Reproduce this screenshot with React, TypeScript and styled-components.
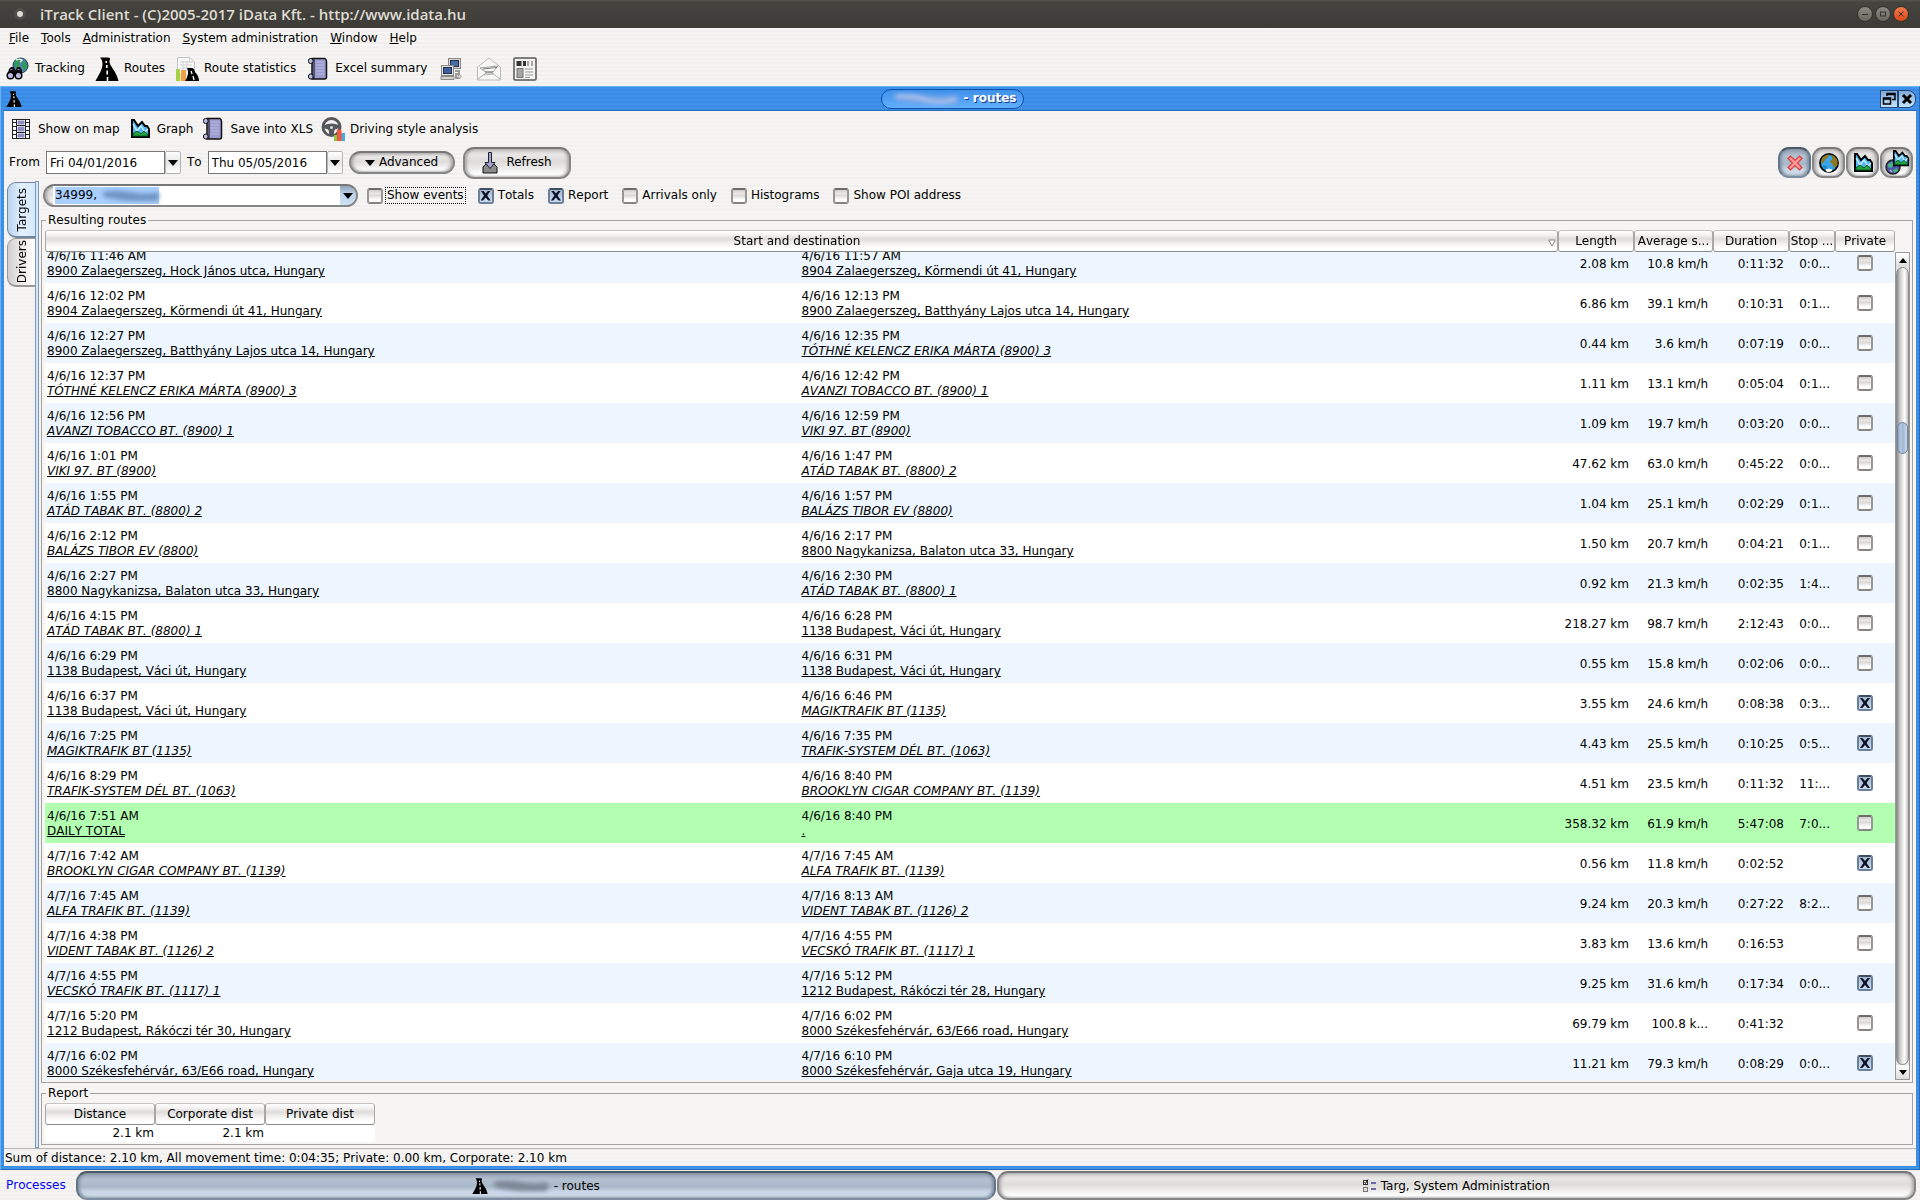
import React, { useLayoutEffect, useRef } from "react";
import styled, { createGlobalStyle, css } from "styled-components";

const stripes = css`
  background: repeating-linear-gradient(#f6f5f3 0 2px, #f1f0ee 2px 4px);
`;
const blueStripes = css`
  background: repeating-linear-gradient(#3f92ec 0 2px, #3a8ae3 2px 4px);
`;
const silver = css`
  border: 2px solid #868686;
  border-top-color: #777;
  background: linear-gradient(#c9c8c6, #e8e7e5 20%, #dddcda 45%, #eeedec 70%, #fff 90%);
  box-shadow: inset 2px 0 3px #aaa, inset -2px 0 3px #aaa;
`;
const steel = css`
  border: 2px solid #66788c;
  border-color: #4b5867 #62758a #7d8ea2;
  background: linear-gradient(#8f9dad, #b3c1d1 25%, #a9b8c9 55%, #c9d6e6 75%, #cfdcec);
  box-shadow: inset 2px 0 3px #8492a2, inset -2px 0 3px #8492a2;
`;

const Global = createGlobalStyle`
  * { box-sizing: border-box; }
  body { margin: 0; font-kerning: none; }
  body, button, input {
    font-family: "DejaVu Sans", "Liberation Sans", sans-serif;
    font-size: 12px;
    line-height: 15px;
    color: #000;
  }
  button { margin: 0; padding: 0; border: 0; background: none; }
  svg { display: block; flex: none; }
`;

const Desktop = styled.div`
  ${stripes}
  height: 100vh;
  display: flex;
  flex-direction: column;
  overflow: hidden;
`;

const TitleBar = styled.header`
  height: 28px;
  flex: none;
  display: flex;
  align-items: center;
  padding: 0 11px 0 14px;
  background: linear-gradient(#55534d, #45443f 8%, #3c3b37);
`;
const AppDot = styled.span`
  width: 12px;
  height: 12px;
  border-radius: 50%;
  border: 3px solid #4e4d49;
  background: #dfdbd2;
`;
const AppTitle = styled.h1`
  flex: 1;
  margin: 0 0 0 14px;
  font: 600 15px/20px "Open Sans", "Noto Sans", sans-serif;
  color: #dfdbd2;
`;
const WindowControls = styled.div`
  display: flex;
  gap: 2px;
`;
const RoundButton = styled.button<{ $close?: boolean }>`
  width: 16px;
  height: 16px;
  border-radius: 50%;
  border: 1px solid #33322e;
  background: ${(p) => (p.$close ? "linear-gradient(#f57b50, #dd4814)" : "linear-gradient(#8a8880, #6a6861)")};
`;

const MenuBar = styled.nav`
  height: 21px;
  flex: none;
  display: flex;
  align-items: center;
  gap: 12px;
  padding-left: 9px;
`;
const MenuItem = styled.button`
  &::first-letter { text-decoration: underline; }
`;
const Toolbar = styled.div<{ $inner?: boolean }>`
  height: ${(p) => (p.$inner ? 35 : 37)}px;
  flex: none;
  display: flex;
  align-items: center;
  gap: ${(p) => (p.$inner ? 8 : 10)}px;
  padding-top: ${(p) => (p.$inner ? 1 : 2)}px;
  padding-left: ${(p) => (p.$inner ? 5 : 6)}px;
`;
const ToolButton = styled.button`
  display: flex;
  align-items: center;
  gap: 5px;
`;
const IconButton = styled.button<{ $wide?: boolean }>`
  width: ${(p) => (p.$wide ? 28 : 24)}px;
  display: flex;
  justify-content: center;
`;

const Frame = styled.main`
  flex: 1;
  min-height: 0;
  display: flex;
  flex-direction: column;
  ${blueStripes}
  border-top: 1px solid #6db2fb;
  border-left: 1px solid #6db2fb;
  border-right: 1px solid #2a6bb5;
  border-bottom: 1px solid #2a6bb5;
  padding: 0 3px 3px;
`;
const FrameTitle = styled.div`
  height: 23px;
  flex: none;
  display: grid;
  grid-template-columns: 18px 1fr auto;
  align-items: center;
  padding-left: 2px;
`;
const TitlePill = styled.h2`
  margin: 0;
  height: 20px;
  width: 143px;
  justify-self: center;
  display: flex;
  align-items: center;
  justify-content: flex-end;
  gap: 4px;
  padding-right: 6px;
  border: 1px solid #0a50a8;
  border-radius: 10px;
  background: linear-gradient(#3f90ea, #62b0ff);
  color: #fff;
  font-size: 12px;
  text-shadow: 1px 1px 0 #123a8c;
`;
const FrameControls = styled.div`
  display: flex;
`;
const FrameButton = styled.button<{ $round?: boolean }>`
  width: 18px;
  height: 18px;
  display: grid;
  place-items: center;
  border: 1px solid #23497a;
  border-radius: ${(p) => (p.$round ? "0 8px 8px 0" : "0")};
  background: linear-gradient(#7fa9d8, #c6e3ff);
`;
const FrameBody = styled.div`
  flex: 1;
  min-height: 0;
  display: flex;
  flex-direction: column;
  ${stripes}
  border-top: 1px solid #2a6bb5;
`;

const RangeRow = styled.div`
  height: 33px;
  flex: none;
  display: flex;
  align-items: center;
  padding: 0 3px 0 5px;
  margin-bottom: 2px;
`;
const RangeLabel = styled.label`
  display: flex;
  align-items: center;
  gap: 6px;
`;
const DateInput = styled.input`
  width: 119px;
  height: 23px;
  margin: 0;
  padding: 0 3px;
  border: 1px solid #777;
  background: #fff;
`;
const DropButton = styled.button`
  width: 16px;
  height: 23px;
  margin-right: 6px;
  display: grid;
  place-items: center;
  border: 1px solid #b4b4b4;
  border-radius: 2px;
  background: linear-gradient(#fff, #e6e5e3 50%, #fff);
`;
const AdvancedButton = styled.button`
  ${silver}
  width: 106px;
  height: 23px;
  margin-right: 8px;
  display: flex;
  align-items: center;
  justify-content: center;
  gap: 4px;
  border-radius: 12px;
`;
const RefreshButton = styled.button`
  ${silver}
  width: 108px;
  height: 32px;
  display: flex;
  align-items: center;
  justify-content: center;
  gap: 7px;
  border-radius: 11px;
`;
const ViewButtons = styled.div`
  margin-left: auto;
  display: flex;
  gap: 1px;
`;
const ViewButton = styled.button<{ $on?: boolean }>`
  ${(p) => (p.$on ? steel : silver)}
  width: 33px;
  height: 31px;
  display: grid;
  place-items: center;
  border-radius: 11px;
`;

const Workspace = styled.div`
  flex: 1;
  min-height: 0;
  display: flex;
`;
const TabColumn = styled.div`
  width: 31px;
  flex: none;
  display: flex;
  flex-direction: column;
  padding: 1px 0 0 3px;
`;
const Tab = styled.button<{ $on?: boolean }>`
  height: ${(p) => (p.$on ? 56 : 49)}px;
  display: grid;
  place-items: center;
  padding-left: 2px;
  border: 1px solid ${(p) => (p.$on ? "#7288a2" : "#999")};
  border-bottom-width: 2px;
  border-right-width: 0;
  border-radius: 9px 0 0 9px;
  background: ${(p) =>
    p.$on ? "linear-gradient(90deg, #b9d2ee, #e4f1ff 50%, #d3e8ff)" : "linear-gradient(90deg, #cfcecc, #e9e8e6 40%, #fff)"};
`;
const TabText = styled.span`
  writing-mode: vertical-rl;
  transform: rotate(180deg);
`;
const TabEdge = styled.div`
  width: 4px;
  flex: none;
  border: 1px solid #8296ad;
  background: #d3e8ff;
`;
const Content = styled.div`
  flex: 1;
  min-width: 0;
  display: flex;
  flex-direction: column;
  gap: 3px;
  padding: 2px 3px 3px 2px;
  background: #f6f5f3;
`;
const FilterRow = styled.div`
  ${stripes}
  height: 27px;
  flex: none;
  display: flex;
  align-items: center;
  gap: 9px;
  padding: 0 0 2px 2px;
`;
const Filters = styled.div`
  display: flex;
  gap: 13px;
`;
const Combo = styled.div`
  ${silver}
  width: 315px;
  height: 23px;
  display: flex;
  align-items: stretch;
  padding-left: 8px;
  border-radius: 12px;
  overflow: hidden;
`;
const ComboField = styled.div`
  flex: 1;
  display: flex;
  align-items: center;
  padding-left: 2px;
  background: #fff;
`;
const Selection = styled.div`
  width: 104px;
  height: 17px;
  display: flex;
  align-items: center;
  background: #a9cfff;
`;
const ComboInput = styled.input`
  width: 46px;
  padding: 0;
  border: 0;
  background: transparent;
`;
const ComboArrow = styled.button`
  width: 16px;
  display: grid;
  place-items: center;
  background: linear-gradient(#8fa4bc, #bdd0e6 40%, #cfe3f8);
`;
const CheckLabel = styled.label<{ $focus?: boolean }>`
  display: flex;
  align-items: center;
  gap: 3px;
  & > span {
    padding: 0 1px;
    outline: ${(p) => (p.$focus ? "1px dotted #000" : "none")};
  }
`;
const CheckBox = styled.input.attrs({ type: "checkbox" })`
  appearance: none;
  width: 16px;
  height: 16px;
  margin: 0 auto;
  display: grid;
  place-items: center;
  border: 2px solid #8b8a89;
  border-color: #6d6c6b #989796 #858483;
  border-radius: 3px;
  background: linear-gradient(#d0cfce, #e9e8e7 30%, #dad9d8 45%, #fff 80%);
  &:checked {
    border-color: #3f4d63 #6c7f99 #6c7f99;
    background: linear-gradient(#a9bad1, #c9d9ee);
  }
  &:checked::before {
    content: "";
    width: 10px;
    height: 10px;
    background: #0b1226;
    clip-path: polygon(0 0, 24% 0, 50% 30%, 76% 0, 100% 0, 66% 50%, 100% 100%, 76% 100%, 50% 70%, 24% 100%, 0 100%, 34% 50%);
  }
`;

const Group = styled.fieldset<{ $grow?: boolean }>`
  ${(p) => p.$grow && "flex: 1;"}
  min-height: 0;
  min-width: 0;
  margin: 0;
  padding: 3px 2px 2px 3px;
  display: flex;
  border: 1px solid #a3a2a1;
`;
const Legend = styled.legend`
  height: 14px;
  margin-left: 1px;
  padding: 0 2px;
  line-height: 14px;
`;
const Scroller = styled.div`
  flex: 1;
  min-width: 0;
  overflow: hidden;
`;
const Table = styled.table<{ $fill?: boolean }>`
  width: ${(p) => (p.$fill ? "100%" : "330px")};
  table-layout: fixed;
  border-collapse: separate;
  border-spacing: 0;
  background: #fff;
`;
const HeadCell = styled.th`
  position: sticky;
  top: 0;
  z-index: 1;
  height: 22px;
  padding: 0;
  font-weight: normal;
  white-space: nowrap;
  border: 1px solid #a8a7a6;
  border-top-color: #c4c3c2;
  border-bottom-color: #8c8b8a;
  border-radius: 3px;
  background: linear-gradient(#fff, #f3f2f1 20%, #dedddb 40%, #efeeed 60%, #fff 85%);
`;
const HeadInner = styled.div`
  display: flex;
  align-items: center;
  justify-content: center;
  & > svg { margin: 3px 1px 0 0; }
  & > span { flex: 1; }
`;
const Row = styled.tr<{ $total?: boolean }>`
  height: 40px;
  background: ${(p) => (p.$total ? "#b2ffb2" : "#fff")};
  ${(p) => !p.$total && "&:nth-child(odd) { background: #edf6ff; }"}
`;
const RouteCell = styled.td`
  padding: 2px 2px 0;
`;
const Legs = styled.div`
  display: grid;
  grid-template-columns: 1fr 1fr;
`;
const Leg = styled.div`
  display: flex;
  flex-direction: column;
  align-items: flex-start;
  white-space: nowrap;
`;
const Place = styled.a<{ $poi?: boolean }>`
  color: #000;
  text-decoration: underline;
  font-style: ${(p) => (p.$poi ? "italic" : "normal")};
`;
const NumCell = styled.td<{ $tight?: boolean }>`
  padding: ${(p) => (p.$tight ? "1px 1px 1px 0" : "2px 5px 0 0")};
  text-align: right;
  white-space: nowrap;
`;
const TickCell = styled.td`
  padding: 0;
`;

const ScrollBar = styled.div`
  width: 15px;
  flex: none;
  margin-top: 22px;
  display: flex;
  flex-direction: column;
  border: 1px solid #9b9a99;
  background: #e4e3e2;
`;
const ScrollArrow = styled.button`
  height: 14px;
  display: grid;
  place-items: center;
  background: linear-gradient(#fff, #dedddc);
`;
const ScrollTrack = styled.div`
  flex: 1;
  display: flex;
  flex-direction: column;
  border: 1px solid #8a8a8a;
  border-radius: 7px;
  background: linear-gradient(90deg, #8e8e8e, #cfcecd 30%, #fff 70%, #c2c1c0);
`;
const ScrollSpace = styled.div<{ $share: number }>`
  flex: ${(p) => p.$share};
`;
const ScrollThumb = styled.div`
  height: 32px;
  flex: none;
  border: 1px solid #6f86a3;
  border-radius: 7px;
  background: linear-gradient(90deg, #8da5c4, #b9cbe2 35%, #9fb4cf 50%, #c8d8ec);
`;

const StatusBar = styled.footer`
  height: 18px;
  flex: none;
  padding: 2px 1px 0;
  border-top: 1px solid #b5b4b3;
`;
const TaskBar = styled.nav`
  height: 30px;
  flex: none;
  display: grid;
  grid-template-columns: 75px 1fr 1fr;
  align-items: center;
  padding-right: 4px;
  column-gap: 1px;
`;
const Processes = styled.a`
  padding-left: 6px;
  color: #0000ff;
  text-decoration: none;
`;
const TaskButton = styled.button<{ $on?: boolean }>`
  ${(p) => (p.$on ? steel : silver)}
  height: 29px;
  display: flex;
  align-items: center;
  justify-content: center;
  gap: 4px;
  padding-top: 2px;
  border-radius: 11px;
`;

/* ---------- drawings ---------- */

const Down = () => (
  <svg width="10" height="6" viewBox="0 0 10 6"><path d="M0 0h10L5 6z" /></svg>
);
const Up = () => (
  <svg width="8" height="5" viewBox="0 0 8 5"><path d="M0 5h8L4 0z" /></svg>
);
const DownSmall = () => (
  <svg width="8" height="5" viewBox="0 0 8 5"><path d="M0 0h8L4 5z" /></svg>
);

const Road = ({ size = 24 }: { size?: number }) => (
  <svg width={size} height={size} viewBox="0 0 24 24">
    <path d="M5 .5h8q2.500 0 2 1.500c-1 2-.5 4 .5 6 3 5 6.500 9 8 16H.5c3-6 7-11 7-17C7.500 4 6.500 2 5 .5z" fill="#000" />
    <path d="M11.300 4v2M11.800 8v3M12.200 13.500v4M12.500 20v4" stroke="#fff" strokeWidth="1.600" />
  </svg>
);

const Tracking = () => (
  <svg width="24" height="24" viewBox="0 0 24 24">
    <circle cx="14.500" cy="8.500" r="7.500" fill="#4f83b5" stroke="#1b3350" />
    <path d="M9 4c3-3 6-2 6 0l-2 3 1 3-4 1-2-3zM17 3l4 4v4l-3 3-2-5z" fill="#2f9a55" />
    <path d="M10 3c2-1 5-1 6 0l-2 2" stroke="#e8f4ea" strokeWidth="1.500" fill="none" />
    <path d="M3 12l2-2h3l1 3h1l1-3h3l2 3v6H1z" fill="#111" />
    <path d="M4.500 12.500h2M11.500 12.500h2" stroke="#8d8dc4" />
    <circle cx="4.500" cy="18.500" r="3.300" fill="#b7b9e2" stroke="#000" strokeWidth="1.500" />
    <circle cx="12.500" cy="18.500" r="3.300" fill="#b7b9e2" stroke="#000" strokeWidth="1.500" />
  </svg>
);

const RouteStats = () => (
  <svg width="24" height="24" viewBox="0 0 24 24">
    <path d="M2.500 .5h12l5 4.500V19h-17z" fill="#fafafa" stroke="#c2c2c2" />
    <path d="M14.500 .5V5h5M5 5h12M5 8h12M5 11h12M8 4v10M12 4v10" stroke="#d2d2d2" fill="none" />
    <path d="M1 12h4v12H1z" fill="#a8cf4a" />
    <path d="M5 16h3v8H5z" fill="#dfe7a0" />
    <path d="M6 13h5v11H6z" fill="#f0a04b" />
    <path d="M12 11h5q2 0 3 4 4 4 4 9H10c3-4 4-9 2-13z" fill="#000" />
    <path d="M16 14l1 3M18 19l1 4" stroke="#fff" strokeWidth="1.300" />
  </svg>
);

const Scroll = () => (
  <svg width="24" height="24" viewBox="0 0 24 24">
    <path d="M6 1.500h13q1.500 1 1.500 3V20q0 2-2 2H6z" fill="#9a9ace" stroke="#111" strokeWidth="1.500" />
    <path d="M8 2v20" stroke="#111" />
    <rect x="2.500" y="1.500" width="4.500" height="5" rx="2" fill="#b9b9e4" stroke="#111" />
    <rect x="2.500" y="17" width="4.500" height="5" rx="2" fill="#b9b9e4" stroke="#111" />
    <path d="M10 5h8M10 8h8M10 11h8M10 14h8M10 17h8" stroke="#bcbce6" />
  </svg>
);

const Computers = () => (
  <svg width="24" height="24" viewBox="0 0 24 24">
    <rect x="9.500" y="1.500" width="12" height="10" fill="#d9d8d3" stroke="#8b8a86" />
    <rect x="11.500" y="3.500" width="8" height="6" fill="#4a6aa5" stroke="#24324d" />
    <rect x="2.500" y="8.500" width="12" height="10" fill="#e4e3df" stroke="#8b8a86" />
    <rect x="4.500" y="10.500" width="8" height="6" fill="#3f5f9c" stroke="#24324d" />
    <path d="M2 19.500h13v3H2z" fill="#d4d3cf" stroke="#8b8a86" />
    <path d="M16 14h4v3h-3v4h4" fill="none" stroke="#9b9a96" strokeWidth="2" />
    <circle cx="20.500" cy="19.500" r="1.500" fill="#fff" stroke="#8b8a86" />
  </svg>
);

const Envelope = () => (
  <svg width="24" height="24" viewBox="0 0 24 24">
    <path d="M.5 10L12 1l11.500 9v13H.5z" fill="#f7f7f6" stroke="#b9b9b8" />
    <path d="M3 11l18-2-5 6H9z" fill="#fff" stroke="#9d9d9c" />
    <path d="M1 22l8-6h6l8 6M7 18l10-1" stroke="#b0b0af" fill="none" />
    <path d="M6 12l14-1.500M8 15h8" stroke="#777" />
  </svg>
);

const News = () => (
  <svg width="24" height="24" viewBox="0 0 24 24">
    <rect x="1" y="1" width="22" height="22" rx="1" fill="#f4f4f3" stroke="#555" strokeWidth="1.500" />
    <path d="M3.500 4h5v5h-5zM10 4h3v5h-3z" fill="#333" />
    <path d="M14 4h2v5h-2zM18 4h2v5h-2z" fill="#a5a5a4" />
    <rect x="4" y="11.500" width="6" height="9" fill="#a5a5a4" stroke="#777" />
    <path d="M12 12h8M12 15h8M12 18h8M12 20.500h5" stroke="#9b9b9a" />
  </svg>
);

const Film = () => (
  <svg width="24" height="24" viewBox="0 0 24 24">
    <rect x="3.500" y="2.500" width="17" height="19" fill="#fff" stroke="#222" />
    <path d="M7.500 2v20M16.500 2v20M7 8.500h10M7 15.500h10" stroke="#222" />
    <path d="M9 4h6v3H9zM9 10h6v4H9zM9 17h6v3H9z" fill="#8d8dc4" stroke="#8d8dc4" />
    <path d="M3 5.500h5M3 9.500h5M3 13.500h5M3 17.500h5M16 5.500h5M16 9.500h5M16 13.500h5M16 17.500h5" stroke="#222" />
  </svg>
);

const GraphShape = () => (
  <>
    <path d="M1 1l2 0 4 6 4-4 3 4h2l2 3v8H1z" fill="#51b7f5" stroke="#000" strokeWidth="2" />
    <path d="M2 5l4 7 4-5 4 6 3-3" fill="none" stroke="#d8f1ff" strokeWidth="1.300" />
    <path d="M2 17v-2l4-3 4 3 3-3 4 4v1z" fill="#21a63c" stroke="#052" />
  </>
);
const Graph = () => (
  <svg width="24" height="24" viewBox="-3 -2 24 24"><GraphShape /></svg>
);

const Wheel = () => (
  <svg width="24" height="24" viewBox="0 0 24 24">
    <circle cx="10.500" cy="10" r="8.500" fill="none" stroke="#55575a" strokeWidth="3" />
    <path d="M2.500 8.500q8-4 16 0l-.5 2.500-4.500 2-1 6h-4l-1-6L3 11z" fill="#55575a" />
    <path d="M6 12.500l1.500 4M15 12.500l-1.500 4" stroke="#f4f3f1" strokeWidth="1.500" />
    <circle cx="10.500" cy="10.500" r="1.500" fill="#ddd" />
    <path d="M13 18h4v6h-4z" fill="#8cc63f" />
    <path d="M20 16h4v8h-4z" fill="#4aa8e0" />
    <path d="M16 12.500h4.500V24H16z" fill="#f0573f" />
  </svg>
);

const RefreshIcon = () => (
  <svg width="18" height="24" viewBox="0 0 18 24">
    <path d="M2 16l3-3h8l3 3v6H2z" fill="#8a8a8a" stroke="#111" />
    <path d="M7.500 1.500h3v10h3.500l-5 6-5-6h3.500z" fill="#a3a3d8" stroke="#222" />
  </svg>
);

const RedX = () => (
  <svg width="18" height="18" viewBox="0 0 18 18">
    <path d="M2 4.500l2.500-2.500L9 6.500 13.500 2 16 4.500 11.500 9l4.500 4.500-2.500 2.500L9 11.500 4.500 16 2 13.500 6.500 9z" fill="#ff9a9a" stroke="#e03c3c" strokeWidth="1.200" />
  </svg>
);

const Globe = () => (
  <svg width="22" height="22" viewBox="0 0 22 22">
    <circle cx="11" cy="11" r="9" fill="#3aa5ec" stroke="#111" strokeWidth="2" />
    <path d="M4 6q3-3.500 7-3.500l-1 3-3 2-1 3-3 1zM13 3q5 1 6.500 6v4l-4 3-1-4-3-2 3-3z" fill="#8c7a22" />
    <path d="M5 13l4 1-1 4-3-3z" fill="#1f86c8" />
    <path d="M8 18l3-1 3 1-2 1.500H9z" fill="#fff" stroke="#fff" />
  </svg>
);

const GlobeGraph = () => (
  <svg width="26" height="26" viewBox="0 0 26 26">
    <circle cx="9" cy="17" r="7" fill="#4a56a8" stroke="#222" strokeWidth="1.500" />
    <path d="M4 14l4-2 2 3-3 3-3-1zM9 20l4-2 1 3-4 2z" fill="#48b088" />
    <path d="M6 20l2 2M11 14l2 2" stroke="#c9b0e8" strokeWidth="1.500" />
    <g transform="translate(9 0) scale(.85)"><GraphShape /></g>
  </svg>
);

const SortMark = () => (
  <svg width="8" height="8" viewBox="0 0 8 8"><path d="M.8 1h6.400L4 7z" fill="#fff" stroke="#888" /></svg>
);

const TargetsIcon = () => (
  <svg width="14" height="14" viewBox="0 0 14 14">
    <rect x=".5" y="1.500" width="4" height="4" fill="#fff" stroke="#333" />
    <path d="M1.500 3l1 1.500L5 .5" fill="none" stroke="#000" />
    <rect x=".5" y="8.500" width="4" height="4" fill="#ddd" stroke="#777" />
    <path d="M8 4h5M8 10h5" stroke="#6a6aa8" strokeWidth="2" />
  </svg>
);

const Blurred = styled.g`
  filter: blur(2px);
`;
const Smudge = ({ width, color, light }: { width: number; color: string; light?: string }) => (
  <svg width={width} height="16" viewBox={`0 0 ${width} 16`} overflow="visible">
    <Blurred>
      <path
        d={`M1 4Q${width / 4} 1 ${width / 2} 4T${width - 4} 4Q${width + 1} 8 ${width - 4} 13H${width / 2}Q${width / 4} 12 3 9z`}
        fill={color}
      />
      {light && <path d={`M4 5Q${width / 3} 4 ${width / 2} 9T${width - 5} 8`} stroke={light} strokeWidth="3" fill="none" />}
    </Blurred>
  </svg>
);

/* ---------- data ---------- */

type Stop = [time: string, place: string, poi?: boolean];
type Route = { from: Stop; to: Stop; km: string; speed: string; time: string; stop: string; priv?: boolean; total?: boolean };

const r = (from: Stop, to: Stop, km: string, speed: string, time: string, stop: string, priv = false, total = false): Route => ({
  from, to, km, speed, time, stop, priv, total,
});

const routes: Route[] = [
  r(["4/6/16 11:46 AM", "8900 Zalaegerszeg, Hock János utca, Hungary"], ["4/6/16 11:57 AM", "8904 Zalaegerszeg, Körmendi út 41, Hungary"], "2.08 km", "10.8 km/h", "0:11:32", "0:0..."),
  r(["4/6/16 12:02 PM", "8904 Zalaegerszeg, Körmendi út 41, Hungary"], ["4/6/16 12:13 PM", "8900 Zalaegerszeg, Batthyány Lajos utca 14, Hungary"], "6.86 km", "39.1 km/h", "0:10:31", "0:1..."),
  r(["4/6/16 12:27 PM", "8900 Zalaegerszeg, Batthyány Lajos utca 14, Hungary"], ["4/6/16 12:35 PM", "TÓTHNÉ KELENCZ ERIKA MÁRTA (8900) 3", true], "0.44 km", "3.6 km/h", "0:07:19", "0:0..."),
  r(["4/6/16 12:37 PM", "TÓTHNÉ KELENCZ ERIKA MÁRTA (8900) 3", true], ["4/6/16 12:42 PM", "AVANZI TOBACCO BT. (8900) 1", true], "1.11 km", "13.1 km/h", "0:05:04", "0:1..."),
  r(["4/6/16 12:56 PM", "AVANZI TOBACCO BT. (8900) 1", true], ["4/6/16 12:59 PM", "VIKI 97. BT (8900)", true], "1.09 km", "19.7 km/h", "0:03:20", "0:0..."),
  r(["4/6/16 1:01 PM", "VIKI 97. BT (8900)", true], ["4/6/16 1:47 PM", "ATÁD TABAK BT. (8800) 2", true], "47.62 km", "63.0 km/h", "0:45:22", "0:0..."),
  r(["4/6/16 1:55 PM", "ATÁD TABAK BT. (8800) 2", true], ["4/6/16 1:57 PM", "BALÁZS TIBOR EV (8800)", true], "1.04 km", "25.1 km/h", "0:02:29", "0:1..."),
  r(["4/6/16 2:12 PM", "BALÁZS TIBOR EV (8800)", true], ["4/6/16 2:17 PM", "8800 Nagykanizsa, Balaton utca 33, Hungary"], "1.50 km", "20.7 km/h", "0:04:21", "0:1..."),
  r(["4/6/16 2:27 PM", "8800 Nagykanizsa, Balaton utca 33, Hungary"], ["4/6/16 2:30 PM", "ATÁD TABAK BT. (8800) 1", true], "0.92 km", "21.3 km/h", "0:02:35", "1:4..."),
  r(["4/6/16 4:15 PM", "ATÁD TABAK BT. (8800) 1", true], ["4/6/16 6:28 PM", "1138 Budapest, Váci út, Hungary"], "218.27 km", "98.7 km/h", "2:12:43", "0:0..."),
  r(["4/6/16 6:29 PM", "1138 Budapest, Váci út, Hungary"], ["4/6/16 6:31 PM", "1138 Budapest, Váci út, Hungary"], "0.55 km", "15.8 km/h", "0:02:06", "0:0..."),
  r(["4/6/16 6:37 PM", "1138 Budapest, Váci út, Hungary"], ["4/6/16 6:46 PM", "MAGIKTRAFIK BT (1135)", true], "3.55 km", "24.6 km/h", "0:08:38", "0:3...", true),
  r(["4/6/16 7:25 PM", "MAGIKTRAFIK BT (1135)", true], ["4/6/16 7:35 PM", "TRAFIK-SYSTEM DÉL BT. (1063)", true], "4.43 km", "25.5 km/h", "0:10:25", "0:5...", true),
  r(["4/6/16 8:29 PM", "TRAFIK-SYSTEM DÉL BT. (1063)", true], ["4/6/16 8:40 PM", "BROOKLYN CIGAR COMPANY BT. (1139)", true], "4.51 km", "23.5 km/h", "0:11:32", "11:...", true),
  r(["4/6/16 7:51 AM", "DAILY TOTAL"], ["4/6/16 8:40 PM", "."], "358.32 km", "61.9 km/h", "5:47:08", "7:0...", false, true),
  r(["4/7/16 7:42 AM", "BROOKLYN CIGAR COMPANY BT. (1139)", true], ["4/7/16 7:45 AM", "ALFA TRAFIK BT. (1139)", true], "0.56 km", "11.8 km/h", "0:02:52", "", true),
  r(["4/7/16 7:45 AM", "ALFA TRAFIK BT. (1139)", true], ["4/7/16 8:13 AM", "VIDENT TABAK BT. (1126) 2", true], "9.24 km", "20.3 km/h", "0:27:22", "8:2..."),
  r(["4/7/16 4:38 PM", "VIDENT TABAK BT. (1126) 2", true], ["4/7/16 4:55 PM", "VECSKÓ TRAFIK BT. (1117) 1", true], "3.83 km", "13.6 km/h", "0:16:53", ""),
  r(["4/7/16 4:55 PM", "VECSKÓ TRAFIK BT. (1117) 1", true], ["4/7/16 5:12 PM", "1212 Budapest, Rákóczi tér 28, Hungary"], "9.25 km", "31.6 km/h", "0:17:34", "0:0...", true),
  r(["4/7/16 5:20 PM", "1212 Budapest, Rákóczi tér 30, Hungary"], ["4/7/16 6:02 PM", "8000 Székesfehérvár, 63/E66 road, Hungary"], "69.79 km", "100.8 k...", "0:41:32", ""),
  r(["4/7/16 6:02 PM", "8000 Székesfehérvár, 63/E66 road, Hungary"], ["4/7/16 6:10 PM", "8000 Székesfehérvár, Gaja utca 19, Hungary"], "11.21 km", "79.3 km/h", "0:08:29", "0:0...", true),
];

const filters = [
  { name: "Show events", on: false, focus: true },
  { name: "Totals", on: true },
  { name: "Report", on: true },
  { name: "Arrivals only", on: false },
  { name: "Histograms", on: false },
  { name: "Show POI address", on: false },
];

const StopInfo = ({ stop }: { stop: Stop }) => (
  <Leg>
    <span>{stop[0]}</span>
    <Place href="#" $poi={stop[2]}>{stop[1]}</Place>
  </Leg>
);

function RouteTable() {
  const scroller = useRef<HTMLDivElement>(null);
  useLayoutEffect(() => {
    if (scroller.current) scroller.current.scrollTop = 9;
  }, []);
  return (
    <Scroller ref={scroller}>
      <Table $fill>
        <colgroup>
          <col />
          <col width="76" />
          <col width="79" />
          <col width="76" />
          <col width="46" />
          <col width="60" />
        </colgroup>
        <thead>
          <tr>
            <HeadCell><HeadInner><span>Start and destination</span><SortMark /></HeadInner></HeadCell>
            {["Length", "Average s...", "Duration", "Stop ...", "Private"].map((h) => (
              <HeadCell key={h}><HeadInner>{h}</HeadInner></HeadCell>
            ))}
          </tr>
        </thead>
        <tbody>
          {routes.map((route, i) => (
            <Row key={i} $total={route.total}>
              <RouteCell>
                <Legs>
                  <StopInfo stop={route.from} />
                  <StopInfo stop={route.to} />
                </Legs>
              </RouteCell>
              <NumCell>{route.km}</NumCell>
              <NumCell>{route.speed}</NumCell>
              <NumCell>{route.time}</NumCell>
              <NumCell>{route.stop}</NumCell>
              <TickCell><CheckBox aria-label="Private" defaultChecked={route.priv} /></TickCell>
            </Row>
          ))}
        </tbody>
      </Table>
    </Scroller>
  );
}

export default function App() {
  return (
    <Desktop>
      <Global />
      <TitleBar>
        <AppDot />
        <AppTitle>iTrack Client - (C)2005-2017 iData Kft. - http://www.idata.hu</AppTitle>
        <WindowControls>
          <RoundButton aria-label="Minimize">
            <svg width="14" height="14" viewBox="0 0 14 14"><path d="M4 7.500h6" stroke="#33322e" /></svg>
          </RoundButton>
          <RoundButton aria-label="Maximize">
            <svg width="14" height="14" viewBox="0 0 14 14"><rect x="4.500" y="5" width="5" height="4" fill="none" stroke="#33322e" /></svg>
          </RoundButton>
          <RoundButton $close aria-label="Close">
            <svg width="14" height="14" viewBox="0 0 14 14"><path d="M4.500 4.500l5 5M9.500 4.500l-5 5" stroke="#33322e" /></svg>
          </RoundButton>
        </WindowControls>
      </TitleBar>
      <MenuBar>
        {["File", "Tools", "Administration", "System administration", "Window", "Help"].map((m) => (
          <MenuItem key={m}>{m}</MenuItem>
        ))}
      </MenuBar>
      <Toolbar>
        <ToolButton><Tracking />Tracking</ToolButton>
        <ToolButton><Road />Routes</ToolButton>
        <ToolButton><RouteStats />Route statistics</ToolButton>
        <ToolButton><Scroll />Excel summary</ToolButton>
        <IconButton $wide aria-label="Computers"><Computers /></IconButton>
        <IconButton $wide aria-label="Messages"><Envelope /></IconButton>
        <IconButton aria-label="News"><News /></IconButton>
      </Toolbar>

      <Frame>
        <FrameTitle>
          <Road size={16} />
          <TitlePill><Smudge width={68} color="#7fa8e6" light="#b9c4ea" />- routes</TitlePill>
          <FrameControls>
            <FrameButton aria-label="Restore">
              <svg width="14" height="14" viewBox="0 0 14 14" fill="none" stroke="#000" strokeWidth="1.500">
                <path d="M5 4V1.500h8v6h-3M5 2.500h8" /><path d="M1.500 6h7v6h-7zM1.500 7h7" />
              </svg>
            </FrameButton>
            <FrameButton $round aria-label="Close">
              <svg width="12" height="12" viewBox="0 0 12 12"><path d="M2 2l8 8M10 2l-8 8" stroke="#000" strokeWidth="3" /></svg>
            </FrameButton>
          </FrameControls>
        </FrameTitle>
        <FrameBody>
          <Toolbar $inner>
            <ToolButton><Film />Show on map</ToolButton>
            <ToolButton><Graph />Graph</ToolButton>
            <ToolButton><Scroll />Save into XLS</ToolButton>
            <ToolButton><Wheel />Driving style analysis</ToolButton>
          </Toolbar>
          <RangeRow>
            <RangeLabel>From <DateInput defaultValue="Fri 04/01/2016" /></RangeLabel>
            <DropButton aria-label="Pick start date"><Down /></DropButton>
            <RangeLabel>To <DateInput defaultValue="Thu 05/05/2016" /></RangeLabel>
            <DropButton aria-label="Pick end date"><Down /></DropButton>
            <AdvancedButton><Down />Advanced</AdvancedButton>
            <RefreshButton><RefreshIcon />Refresh</RefreshButton>
            <ViewButtons>
              <ViewButton $on aria-label="No view"><RedX /></ViewButton>
              <ViewButton aria-label="Map"><Globe /></ViewButton>
              <ViewButton aria-label="Graph"><Graph /></ViewButton>
              <ViewButton aria-label="Map and graph"><GlobeGraph /></ViewButton>
            </ViewButtons>
          </RangeRow>
          <Workspace>
            <TabColumn>
              <Tab $on><TabText>Targets</TabText></Tab>
              <Tab><TabText>Drivers</TabText></Tab>
            </TabColumn>
            <TabEdge />
            <Content>
              <FilterRow>
                <Combo>
                  <ComboField>
                    <Selection>
                      <ComboInput aria-label="Target" defaultValue="34999," />
                      <Smudge width={60} color="#6f96c4" />
                    </Selection>
                  </ComboField>
                  <ComboArrow aria-label="Choose target"><Down /></ComboArrow>
                </Combo>
                <Filters>
                  {filters.map((f) => (
                    <CheckLabel key={f.name} $focus={f.focus}>
                      <CheckBox defaultChecked={f.on} />
                      <span>{f.name}</span>
                    </CheckLabel>
                  ))}
                </Filters>
              </FilterRow>
              <Group $grow>
                <Legend>Resulting routes</Legend>
                <RouteTable />
                <ScrollBar>
                  <ScrollArrow aria-label="Scroll up"><Up /></ScrollArrow>
                  <ScrollTrack>
                    <ScrollSpace $share={154} />
                    <ScrollThumb />
                    <ScrollSpace $share={612} />
                  </ScrollTrack>
                  <ScrollArrow aria-label="Scroll down"><DownSmall /></ScrollArrow>
                </ScrollBar>
              </Group>
              <Group>
                <Legend>Report</Legend>
                <Table>
                  <thead>
                    <tr>
                      {["Distance", "Corporate dist", "Private dist"].map((h) => (
                        <HeadCell key={h}>{h}</HeadCell>
                      ))}
                    </tr>
                  </thead>
                  <tbody>
                    <tr>
                      <NumCell $tight>2.1 km</NumCell>
                      <NumCell $tight>2.1 km</NumCell>
                      <NumCell $tight />
                    </tr>
                  </tbody>
                </Table>
              </Group>
            </Content>
          </Workspace>
          <StatusBar>Sum of distance: 2.10 km, All movement time: 0:04:35; Private: 0.00 km, Corporate: 2.10 km</StatusBar>
        </FrameBody>
      </Frame>
      <TaskBar>
        <Processes href="#">Processes</Processes>
        <TaskButton $on><Road size={16} /><Smudge width={58} color="#7d8896" />- routes</TaskButton>
        <TaskButton><TargetsIcon />Targ, System Administration</TaskButton>
      </TaskBar>
    </Desktop>
  );
}
